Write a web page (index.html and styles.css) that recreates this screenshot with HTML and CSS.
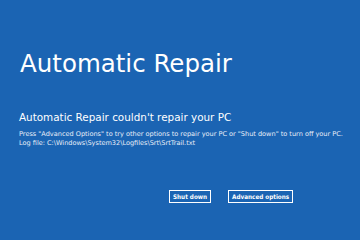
FILE: index.html
```html
<!DOCTYPE html>
<html lang="en">
<head>
  <meta charset="UTF-8" />
  <title>Automatic Repair</title>
  <link rel="stylesheet" href="styles.css">
</head>
<body>
  <div class="screen">
    <h1>Automatic Repair</h1>
    <h2>Automatic Repair couldn't repair your PC</h2>
    <p class="details">Press "Advanced Options" to try other options to repair your PC or "Shut down" to turn off your PC.<br>Log file: C:\Windows\System32\Logfiles\Srt\SrtTrail.txt</p>
    <div class="actions">
      <button class="btn">Shut down</button>
      <button class="btn">Advanced options</button>
    </div>
  </div>
</body>
</html>
```

FILE: styles.css
```css
* {
  box-sizing: border-box;
}

html, body {
  margin: 0;
  height: 100%;
}

body {
  background: #1b64b3;
  color: #fff;
  font-family: 'DejaVu Sans', sans-serif;
  overflow: hidden;
}

.screen {
  padding: 49px 0 0 19px;
}

h1 {
  margin: 0 0 0 1px;
  font-size: 24.5px;
  font-weight: normal;
  line-height: 30px;
}

h2 {
  margin: 31px 0 0 0;
  font-size: 10.4px;
  font-weight: normal;
  line-height: 14px;
}

.details {
  margin: 6px 0 0 0;
  font-size: 6.55px;
  line-height: 8.5px;
  color: #e8eef8;
}

.actions {
  display: flex;
  gap: 17px;
  margin: 43px 0 0 150px;
}

.btn {
  background: transparent;
  color: #fff;
  border: 1px solid #fff;
  font-family: 'DejaVu Sans Condensed', 'DejaVu Sans', sans-serif;
  font-weight: bold;
  font-size: 6.3px;
  height: 13px;
  padding: 0 3px;
  margin: 0;
}
```
